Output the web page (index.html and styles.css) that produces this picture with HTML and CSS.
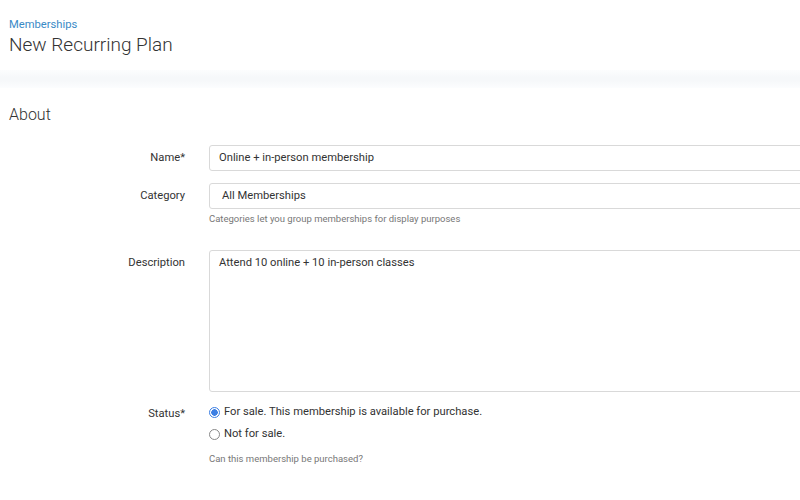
FILE: index.html
```html
<!DOCTYPE html>
<html>
<head>
<meta charset="utf-8">
<link rel="stylesheet" href="styles.css">
</head>
<body>
<header class="page-head">
  <a class="crumb" href="#">Memberships</a>
  <h1 class="title">New Recurring Plan</h1>
</header>
<div class="band"></div>
<main class="content">
  <h2 class="section">About</h2>
  <form class="form">
    <div class="row">
      <label class="lbl">Name*</label>
      <div class="field"><div class="input">Online + in-person membership</div></div>
    </div>
    <div class="row row-cat">
      <label class="lbl">Category</label>
      <div class="field">
        <div class="input select">All Memberships</div>
        <p class="help">Categories let you group memberships for display purposes</p>
      </div>
    </div>
    <div class="row row-desc">
      <label class="lbl lbl-top">Description</label>
      <div class="field"><div class="input textarea">Attend 10 online + 10 in-person classes</div></div>
    </div>
    <div class="row row-status">
      <label class="lbl lbl-status">Status*</label>
      <div class="field">
        <div class="radio"><span class="dot on"></span><span>For sale. This membership is available for purchase.</span></div>
        <div class="radio"><span class="dot"></span><span>Not for sale.</span></div>
        <p class="help help-status">Can this membership be purchased?</p>
      </div>
    </div>
  </form>
</main>
</body>
</html>
```

FILE: styles.css
```css
* { box-sizing: border-box; }
html, body { margin: 0; padding: 0; }
body {
  width: 800px;
  height: 500px;
  overflow: hidden;
  background: #fff;
  font-family: Roboto, "Liberation Sans", sans-serif;
  color: #333;
}
.page-head {
  padding: 17px 0 0 9px;
  height: 70px;
}
.crumb {
  display: block;
  font-size: 11.2px;
  line-height: 15px;
  color: #3a8ac6;
  text-decoration: none;
}
.title {
  margin: 1px 0 0;
  font-size: 19px;
  line-height: 24px;
  font-weight: 300;
  color: #333;
}
.band {
  height: 18px;
  background: linear-gradient(to bottom, #fcfdfe 0%, #f6f8fa 40%, #f6f8fa 60%, #fcfdfe 100%);
}
.content { padding: 0 0 0 9px; }
.section {
  margin: 17px 0 0;
  font-size: 16px;
  line-height: 20px;
  font-weight: 300;
  color: #333;
}
.form {
  margin-top: 20px;
  display: flex;
  flex-direction: column;
  gap: 12px;
}
.row {
  display: grid;
  grid-template-columns: 176px 1fr;
  column-gap: 24px;
  align-items: start;
}
.lbl {
  text-align: right;
  font-size: 11.2px;
  line-height: 26px;
  color: #333;
}
.lbl-status { line-height: 16px; margin-top: 5px; }
.field { min-width: 0; }
.input {
  width: 620px;
  height: 26px;
  border: 1px solid #d9d9d9;
  border-radius: 3px;
  padding: 0 9px;
  font-size: 11.2px;
  line-height: 24px;
  color: #333;
  background: #fff;
}
.select { padding-left: 12px; }
.help {
  margin: 3px 0 0;
  font-size: 9.5px;
  line-height: 14px;
  color: #777;
}
.row-desc { margin-top: 12px; }
.textarea {
  height: 142px;
  padding-top: 4px;
  line-height: 16px;
}
.row-status { margin-top: -3px; }
.radio {
  display: flex;
  align-items: center;
  gap: 4px;
  font-size: 11.2px;
  line-height: 22px;
  color: #333;
}
.dot {
  width: 11px;
  height: 11px;
  border-radius: 50%;
  border: 1px solid #888;
  background: #fff;
  flex: none;
}
.dot.on {
  border-color: #3b7ee3;
  background: radial-gradient(circle, #3b7ee3 0 3px, #fff 3.5px);
}
.help-status { margin-top: 7px; }
```
